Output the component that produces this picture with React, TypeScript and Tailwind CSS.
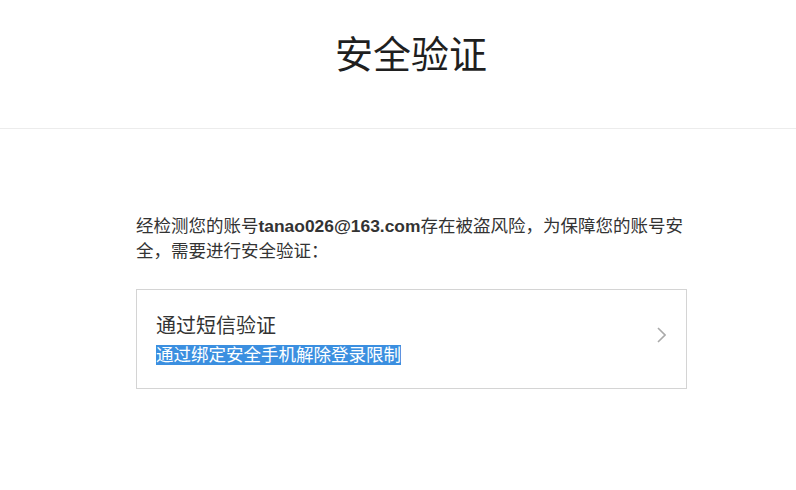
export default function App() {
  const font = { fontFamily: '"Liberation Sans", "Noto Sans CJK SC", sans-serif' };
  return (
    <div className="w-[796px] h-[490px] bg-white overflow-hidden" style={font}>
      <div className="h-[129px] border-b border-[#ececec] pl-[26px] pt-[30px]">
        <h1 className="text-center text-[38px] leading-[44px] text-[#1f1f1f] font-normal" style={{ fontFamily: '"Noto Sans CJK SC", sans-serif' }}>
          安全验证
        </h1>
      </div>
      <div className="ml-[136px] w-[551px]">
        <p className="mt-[85px] w-[551px] text-[17.5px] leading-[25px] text-[#333]">
          经检测您的账号<b className="text-[17.4px] font-bold">tanao026@163.com</b>存在被盗风险，为保障您的账号安全，需要进行安全验证：
        </p>
        <div className="mt-[25px] h-[100px] border border-[#d4d4d4] flex">
          <div className="flex-1 pl-[19px] pt-[24px]">
            <div className="text-[20px] leading-[24px] text-[#333]">通过短信验证</div>
            <div className="mt-[6px] h-[20px]">
              <span className="inline-block bg-[#3b8fe0] text-white text-[17.5px] leading-[20px]">通过绑定安全手机解除登录限制</span>
            </div>
          </div>
          <div className="self-start mt-[37px] mr-[20px]">
            <svg width="9" height="16" viewBox="0 0 9 16" fill="none">
              <path d="M1 1 L8 8 L1 15" stroke="#aaaaaa" strokeWidth="1.6" />
            </svg>
          </div>
        </div>
      </div>
    </div>
  );
}
